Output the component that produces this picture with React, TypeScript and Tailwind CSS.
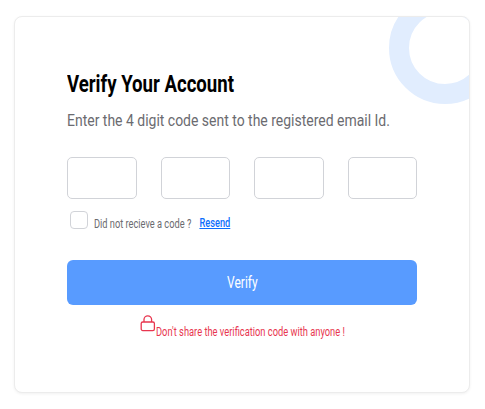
import React from 'react';

const LockIcon = () => (
  <svg width="16" height="17" viewBox="0 0 16 17" fill="none" stroke="#e8364f" strokeWidth="1.3" className="shrink-0">
    <rect x="1.2" y="7" width="13.2" height="8.6" rx="1.6" />
    <path d="M4 7V4.6a3.8 3.8 0 0 1 7.6 0V7" />
  </svg>
);

export default function App() {
  return (
    <div className="w-[485px] h-[409px] bg-white pt-4 pl-[14px] font-['Roboto',sans-serif]">
      <div className="relative w-[456px] h-[377px] overflow-hidden rounded-[8px] border border-[#ececec] bg-white pl-[52px] pt-[51px] shadow-[0_1px_3px_rgba(0,0,0,0.06)]">
        <div className="absolute -top-[25px] -right-[32px] h-[112px] w-[112px] rounded-full border-[20px] border-[#e1edfe]" />

        <h1 className="origin-left scale-x-[0.775] whitespace-nowrap text-[24px] leading-[32px] font-bold text-black">
          Verify Your Account
        </h1>
        <p className="mt-[9px] origin-left scale-x-[0.873] whitespace-nowrap text-[16px] leading-[24px] text-[#6b6b70]">
          Enter the 4 digit code sent to the registered email Id.
        </p>

        <div className="mt-6 flex w-[350px] justify-between">
          <input className="h-[42px] w-[70px] rounded-[5px] border border-[#d1d3d8] bg-white" />
          <input className="h-[42px] w-[69px] rounded-[5px] border border-[#d1d3d8] bg-white" />
          <input className="h-[42px] w-[70px] rounded-[5px] border border-[#d1d3d8] bg-white" />
          <input className="h-[42px] w-[69px] rounded-[5px] border border-[#d1d3d8] bg-white" />
        </div>

        <div className="mt-3 ml-[3px] flex h-[18px] items-center">
          <span className="h-[18px] w-[18px] shrink-0 rounded-[4px] border border-[#d1d3d8] bg-white" />
          <div className="ml-[6px] flex origin-left scale-x-[0.74] translate-y-[3px] items-center whitespace-nowrap text-[12.5px] text-[#6b6b70]">
            <span className="pt-[2px]">Did not recieve a code ?</span>
            <a className="ml-[11px] font-medium text-[#0d6efd] underline">Resend</a>
          </div>
        </div>

        <button className="mt-[31px] h-[45px] w-[350px] rounded-[6px] bg-[#589bff] text-white">
          <span className="inline-block scale-x-[0.75] text-[16px]">Verify</span>
        </button>

        <div className="mt-[10px] ml-[73px] flex items-end whitespace-nowrap">
          <LockIcon />
          <span className="origin-left translate-y-[7px] scale-x-[0.745] text-[12.5px] leading-[14px] text-[#e8364f]">
            Don't share the verification code with anyone !
          </span>
        </div>
      </div>
    </div>
  );
}
